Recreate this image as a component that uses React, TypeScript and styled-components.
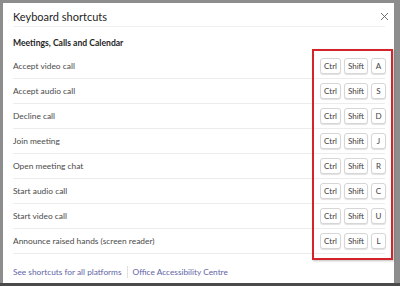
import React from "react";
import styled, { createGlobalStyle } from "styled-components";

const GlobalStyle = createGlobalStyle`
    html, body {
        margin: 0;
        padding: 0;
        width: 400px;
        height: 286px;
        overflow: hidden;
        background: #8a8a8a;
    }
    * {
        box-sizing: border-box;
    }
`;

const Frame = styled.div`
    width: 400px;
    height: 286px;
    padding: 3px 6px 0 3px;
    border-bottom: 3px solid #4a4a4a;
    background: #8d8d8d;
    font-family: "Segoe UI", "Lato", "Liberation Sans", sans-serif;
`;

const Panel = styled.div`
    position: relative;
    height: 100%;
    background: #ffffff;
    display: flex;
    flex-direction: column;
    padding: 0 9px 0 10px;
`;

const Header = styled.div`
    display: flex;
    align-items: center;
    justify-content: space-between;
    height: 24px;
    padding-top: 4px;
    border-bottom: 1px solid #f0f0f0;
`;

const Title = styled.div`
    font-size: 11px;
    color: #242424;
`;

const Close = styled.div`
    width: 10px;
    height: 10px;
    margin-right: -4px;
    display: flex;
    align-items: center;
    justify-content: center;
`;

const Section = styled.div`
    font-size: 8.6px;
    font-weight: 700;
    color: #242424;
    height: 27px;
    display: flex;
    align-items: center;
    padding-top: 5px;
`;

const Row = styled.div`
    display: flex;
    align-items: center;
    justify-content: space-between;
    height: 25px;
    border-bottom: 1px solid #ececec;
`;

const Label = styled.span`
    font-size: 8.4px;
    color: #4a4a4a;
`;

const Keys = styled.div`
    display: flex;
    gap: 3px;
    margin-right: -1px;
`;

const Key = styled.span<{ w: number }>`
    width: ${(p) => p.w}px;
    height: 16px;
    display: flex;
    align-items: center;
    justify-content: center;
    border: 1px solid #d6d6d6;
    border-radius: 3px;
    box-shadow: 0 1px 1px rgba(0, 0, 0, 0.12);
    font-size: 8px;
    color: #424242;
    background: #fff;
`;

const Footer = styled.div`
    display: flex;
    align-items: center;
    height: 29px;
    padding-top: 6px;
    font-size: 8.3px;
    color: #6264a7;
    gap: 5px;
`;

const Divider = styled.span`
    width: 1px;
    height: 12px;
    background: #e0e0e0;
`;

const Highlight = styled.div`
    position: absolute;
    left: 309px;
    top: 46px;
    width: 81px;
    height: 211px;
    border: 2px solid #d4242b;
    box-shadow: 1px 1px 2px rgba(0, 0, 0, 0.25);
    pointer-events: none;
`;

const shortcuts: [string, string][] = [
    ["Accept video call", "A"],
    ["Accept audio call", "S"],
    ["Decline call", "D"],
    ["Join meeting", "J"],
    ["Open meeting chat", "R"],
    ["Start audio call", "C"],
    ["Start video call", "U"],
    ["Announce raised hands (screen reader)", "L"]
];

export default function App() {
    return (
        <Frame>
            <GlobalStyle />
            <Panel>
                <Header>
                    <Title>Keyboard shortcuts</Title>
                    <Close>
                        <svg width="9" height="9" viewBox="0 0 9 9">
                            <path d="M1 1L8 8M8 1L1 8" stroke="#616161" strokeWidth="0.9" />
                        </svg>
                    </Close>
                </Header>
                <Section>Meetings, Calls and Calendar</Section>
                {shortcuts.map(([label, letter]) => (
                    <Row key={label}>
                        <Label>{label}</Label>
                        <Keys>
                            <Key w={21}>Ctrl</Key>
                            <Key w={24}>Shift</Key>
                            <Key w={15}>{letter}</Key>
                        </Keys>
                    </Row>
                ))}
                <Footer>
                    <span>See shortcuts for all platforms</span>
                    <Divider />
                    <span>Office Accessibility Centre</span>
                </Footer>
                <Highlight />
            </Panel>
        </Frame>
    );
}
